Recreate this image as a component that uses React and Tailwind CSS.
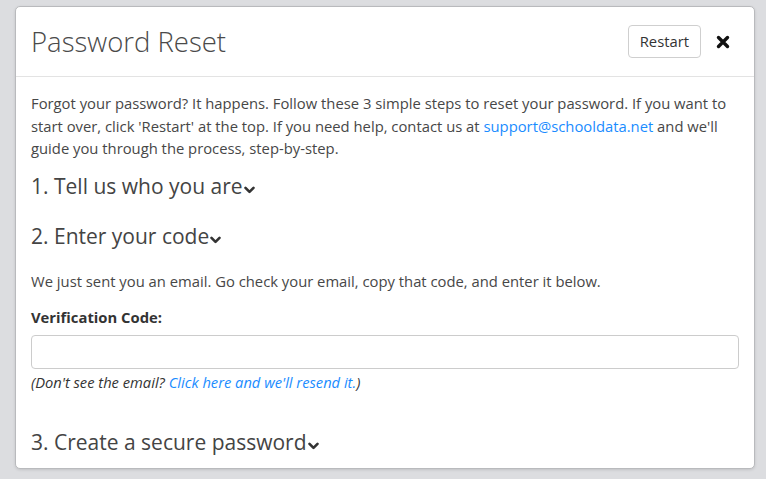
import { useState } from "react";

function Chevron() {
  return (
    <svg width="11" height="8" viewBox="0 0 11 8" className="inline-block ml-[1px] align-baseline">
      <polyline points="1.5,1.8 5.5,5.8 9.5,1.8" fill="none" stroke="#333" strokeWidth="2.6" strokeLinecap="round" strokeLinejoin="round" />
    </svg>
  );
}

function CloseIcon() {
  return (
    <svg width="14" height="14" viewBox="0 0 14 14">
      <path d="M2.5 2.5 L11.5 11.5 M11.5 2.5 L2.5 11.5" stroke="#111" strokeWidth="3.4" strokeLinecap="round" />
    </svg>
  );
}

export default function App() {
  const [code, setCode] = useState("");

  return (
    <div
      className="min-h-[479px] bg-[#dcdde0] pt-[6px] pl-[15px] pr-[11px] pb-[10px]"
      style={{ fontFamily: '"Open Sans", "Liberation Sans", sans-serif' }}
    >
      <div className="bg-white border border-[#b9babd] rounded-[5px] shadow-[0_1px_3px_rgba(0,0,0,0.12)] w-[740px]">
        <div className="flex items-center justify-between h-[70px] pl-[15px] pr-[24px] border-b border-[#e3e3e3]">
          <h1 className="text-[27.5px] font-light text-[#4a4a4a] leading-none">Password Reset</h1>
          <div className="flex items-center gap-[15px]">
            <button className="h-[33px] px-[11px] border border-[#cfcfcf] rounded-[4px] text-[14.8px] text-[#333] bg-white">
              Restart
            </button>
            <button className="flex items-center">
              <CloseIcon />
            </button>
          </div>
        </div>

        <div className="px-[15px] pt-[15px] pb-[14px] text-[14.8px] text-[#474747]">
          <p className="leading-[22.5px]">
            Forgot your password? It happens. Follow these 3 simple steps to reset your password. If you want to
            start over, click 'Restart' at the top. If you need help, contact us at{" "}
            <a className="text-[#1a8cff]">support@schooldata.net</a> and we'll guide you through the process,
            step-by-step.
          </p>

          <h3 className="mt-[14px] text-[21px] leading-[24px] text-[#444]">
            1. Tell us who you are<Chevron />
          </h3>
          <h3 className="mt-[26px] text-[21px] leading-[24px] text-[#444]">
            2. Enter your code<Chevron />
          </h3>

          <p className="mt-[22px] leading-[22.5px]">
            We just sent you an email. Go check your email, copy that code, and enter it below.
          </p>

          <label className="block mt-[14px] mb-[6px] font-bold leading-[22.5px] text-[#333]">Verification Code:</label>
          <input
            value={code}
            onChange={(e) => setCode(e.target.value)}
            className="block w-full h-[34px] border border-[#cccccc] rounded-[4px] px-3 outline-none"
          />
          <p className="mt-[3px] text-[14.7px] italic leading-[20px] text-[#333]">
            (Don't see the email? <a className="text-[#1a8cff]">Click here and we'll resend it.</a>)
          </p>

          <h3 className="mt-[38px] text-[21px] leading-[24px] text-[#444]">
            3. Create a secure password<Chevron />
          </h3>
        </div>
      </div>
    </div>
  );
}
